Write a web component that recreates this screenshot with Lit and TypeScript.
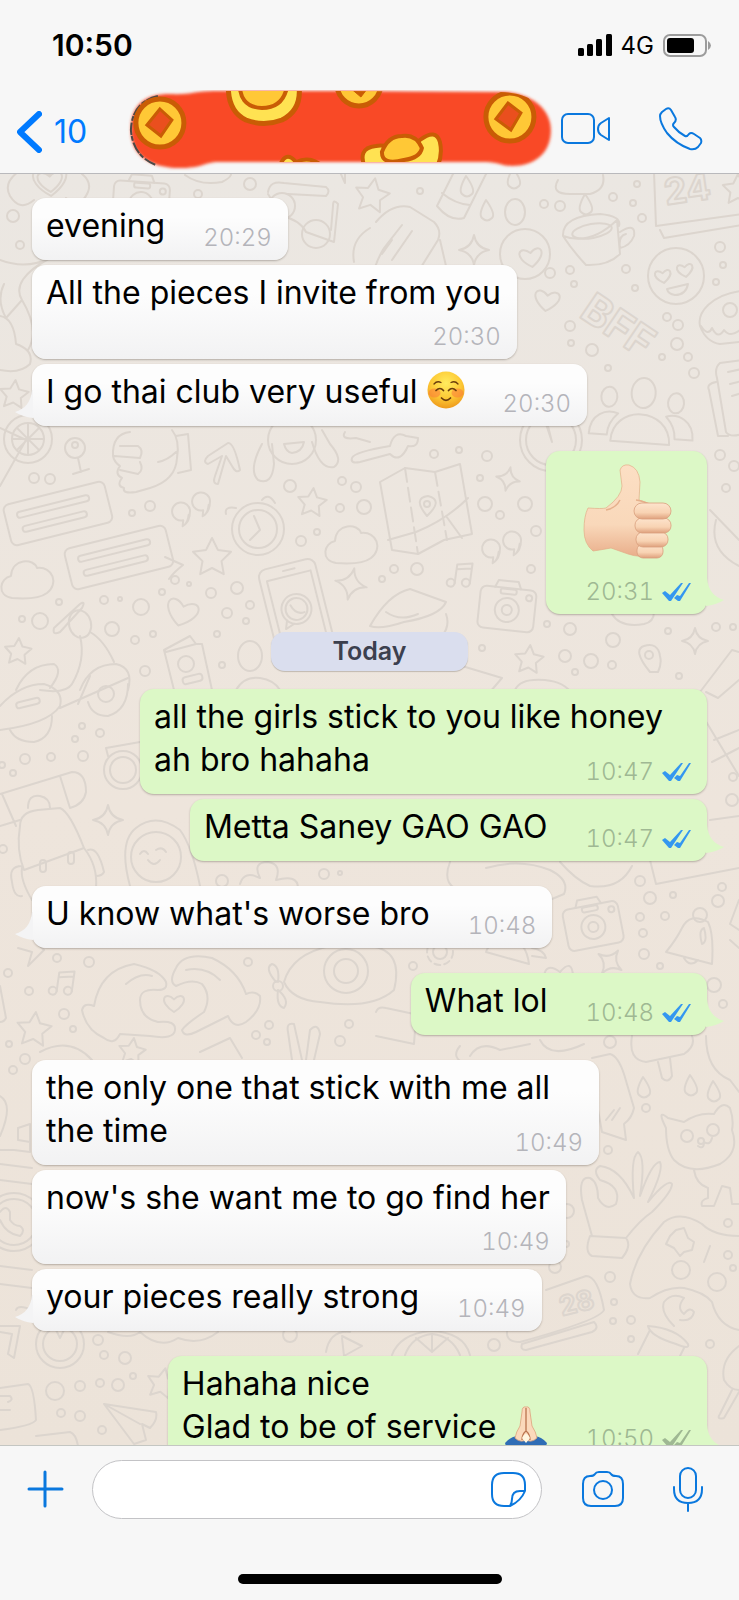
import { LitElement, html, svg, css, nothing } from "lit";
import { customElement, property } from "lit/decorators.js";

type Emoji = "smile" | "pray" | "thumb";
type Status = "read" | "sent";

interface Message {
  text: string;
  time: string;
  mine?: boolean;
  status?: Status;
  emoji?: Emoji;
  tail?: boolean;
  below?: boolean;
  next?: boolean;
}

const yesterday: Message[] = [
  { text: "evening", time: "20:29" },
  { text: "All the pieces I invite from you", time: "20:30", below: true },
  { text: "I go thai club very useful ", time: "20:30", emoji: "smile", tail: true },
  { text: "", time: "20:31", emoji: "thumb", mine: true, status: "read", tail: true, next: true },
];

const today: Message[] = [
  { text: "all the girls stick to you like honey ah bro hahaha", time: "10:47", mine: true, status: "read" },
  { text: "Metta Saney GAO GAO", time: "10:47", mine: true, status: "read", tail: true },
  { text: "U know what's worse bro", time: "10:48", tail: true, next: true },
  { text: "What lol", time: "10:48", mine: true, status: "read", tail: true, next: true },
  { text: "the only one that stick with me all the time", time: "10:49", next: true },
  { text: "now's she want me to go find her", time: "10:49", below: true },
  { text: "your pieces really strong", time: "10:49", tail: true },
  { text: "Hahaha nice\nGlad to be of service ", time: "10:50", emoji: "pray", mine: true, status: "sent", tail: true, next: true },
];

/* ---------- wallpaper doodles ---------- */

const at = (x: number, y: number, rot: number, body: unknown) =>
  svg`<g transform="translate(${x} ${y}) rotate(${rot})">${body}</g>`;

const star = (x: number, y: number, r: number, rot = 0) => {
  const pts = Array.from({ length: 10 }, (_, i) => {
    const a = (Math.PI / 5) * i - Math.PI / 2;
    const q = i % 2 ? r * 0.5 : r;
    return `${(q * Math.cos(a)).toFixed(1)},${(q * Math.sin(a)).toFixed(1)}`;
  }).join(" ");
  return at(x, y, rot, svg`<polygon points=${pts} />`);
};

const sparkle = (x: number, y: number, r: number, rot = 0) =>
  at(x, y, rot, svg`<path d="M0 ${-r}Q${r * 0.15} ${-r * 0.15} ${r} 0Q${r * 0.15} ${r * 0.15} 0 ${r}Q${-r * 0.15} ${r * 0.15} ${-r} 0Q${-r * 0.15} ${-r * 0.15} 0 ${-r}Z" />`);

const heart = (x: number, y: number, s: number, rot = 0) =>
  at(x, y, rot, svg`<path d="M0 ${s}C${-s * 1.9} ${-s * 0.2} ${-s} ${-s * 1.4} 0 ${-s * 0.4}C${s} ${-s * 1.4} ${s * 1.9} ${-s * 0.2} 0 ${s}Z" />`);

const drop = (x: number, y: number) =>
  at(x, y, 0, svg`<path d="M-1 -11Q9 3 5 7Q0 12 -5 7Q-9 3 -1 -11Z" />`);

const quote = (x: number, y: number) =>
  at(x, y, 5, svg`<path d="M8 3Q8 12 3 15L3 9A9 9 0 1 1 9 -1Q10 10 3 15" />`);

const note = (x: number, y: number) =>
  at(x, y, 8, svg`<circle cx="-9" cy="10" r="4" /><circle cx="6" cy="8" r="4" /><path d="M-5 10V-9L10 -12V8M-5 -4L10 -7" />`);

const camera = (x: number, y: number, rot: number) =>
  at(x, y, rot, svg`<rect x="-28" y="-20" width="56" height="42" rx="6" /><path d="M-14 -20L-11 -27H9L12 -20" /><rect x="-8" y="-19" width="16" height="5" rx="2" /><circle cy="2" r="12" /><circle cy="2" r="5" /><circle cx="21" cy="-12" r="3" />`);

const cloud = (x: number, y: number, rot = 0) =>
  at(x, y, rot, svg`<path d="M-16 18C-32 15 -28 -2 -17 -4C-16 -22 6 -22 9 -12C25 -14 31 4 19 13Q10 20 -16 18Z" />`);

const bubble = (x: number, y: number) =>
  at(x, y, -14, svg`<rect x="-50" y="-21" width="104" height="42" rx="6" /><rect x="-38" y="-11" width="74" height="6" rx="3" /><rect x="-36" y="4" width="66" height="6" rx="3" />`);

const people = (x: number, y: number) =>
  at(x, y, 4, svg`<ellipse cy="-24" rx="12" ry="15" /><path d="M-30 26C-30 -12 28 -12 29 26Z" /><ellipse cx="-34" cy="-18" rx="8" ry="10" /><ellipse cx="33" cy="-16" rx="8" ry="10" /><path d="M-52 20C-52 0 -36 -6 -24 -2Q-34 8 -34 20ZM52 20C52 0 36 -6 24 -2Q34 8 34 20Z" />`);

const phoneDoodle = (x: number, y: number) =>
  at(x, y, -14, svg`<rect x="-29" y="-44" width="58" height="100" rx="8" /><rect x="-22" y="-32" width="45" height="76" /><path d="M-4 -38H8" /><circle cy="2" r="15" /><circle cy="2" r="11" /><path d="M-12 11L-15 19L-6 16M-5 -3Q-2 8 7 7" />`);

const dots: number[][] = [
  [250, 184, 6], [198, 194, 4], [13, 216, 6], [20, 245, 4], [420, 191, 3], [544, 204, 4], [560, 206, 5], [613, 197, 4], [637, 184, 3],
  [633, 203, 3], [642, 218, 4], [550, 273, 5], [570, 270, 4], [574, 284, 3], [626, 269, 4], [635, 288, 3], [720, 247, 5], [723, 265, 3],
  [716, 282, 3], [570, 326, 5], [571, 343, 3], [592, 350, 6], [667, 317, 4], [678, 325, 5], [677, 344, 6], [662, 357, 3], [688, 357, 4],
  [608, 368, 3], [694, 373, 5], [34, 478, 5], [50, 479, 5], [150, 506, 5], [132, 513, 3], [290, 486, 6], [342, 481, 4], [356, 487, 5],
  [340, 508, 4], [364, 507, 7], [301, 541, 5], [317, 532, 3], [175, 580, 4], [162, 592, 3], [189, 584, 2], [211, 593, 5], [237, 588, 6],
  [104, 600, 4], [120, 599, 2], [59, 602, 3], [141, 607, 8], [40, 621, 8], [22, 619, 3], [112, 629, 7], [135, 640, 4], [153, 634, 3],
  [227, 613, 5], [250, 605, 4], [246, 621, 3], [217, 634, 3], [222, 665, 3], [145, 671, 5], [434, 454, 4], [459, 450, 3], [487, 456, 5],
  [480, 478, 3], [485, 504, 7], [525, 504, 7], [500, 515, 4], [536, 531, 5], [394, 569, 4], [417, 569, 6], [382, 579, 3], [531, 569, 4],
  [547, 624, 3], [570, 629, 6], [613, 640, 7], [565, 656, 6], [591, 661, 7], [612, 665, 4], [482, 648, 3], [575, 672, 3], [668, 631, 3],
  [720, 455, 5], [734, 466, 5], [726, 488, 4], [716, 627, 4], [733, 627, 3], [679, 676, 3], [82, 726, 3], [100, 733, 4], [75, 739, 3],
  [25, 759, 5], [51, 757, 4], [83, 756, 5], [2, 765, 3], [13, 773, 3], [3, 849, 4], [324, 874, 5], [340, 873, 2], [222, 881, 6],
  [57, 958, 4], [89, 962, 5], [8, 973, 4], [29, 991, 4], [64, 1014, 5], [73, 1029, 3], [248, 962, 4], [9, 1044, 3], [269, 1025, 4],
  [256, 1035, 4], [349, 1024, 4], [340, 1041, 5], [267, 1042, 3], [733, 777, 4], [732, 800, 6], [640, 881, 5], [650, 898, 6],
  [673, 895, 3], [722, 887, 4], [718, 901, 6], [640, 917, 4], [665, 916, 4], [643, 933, 4], [644, 954, 5], [660, 966, 3], [413, 966, 4],
  [714, 985, 7], [723, 1004, 4], [25, 1059, 5], [13, 1070, 4], [610, 1042, 6], [646, 1108, 4], [608, 1150, 4], [567, 1211, 7],
  [566, 1244, 3], [555, 1267, 6], [610, 1277, 5], [614, 1302, 3], [613, 1321, 3], [631, 1320, 4], [631, 1339, 3], [728, 1223, 4],
  [728, 1255, 4], [733, 1268, 3], [710, 1344, 4], [494, 1345, 6], [98, 1340, 5], [104, 1355, 4], [125, 1358, 6], [133, 1376, 3],
  [100, 1383, 4], [80, 1386, 5], [118, 1385, 6], [55, 1391, 9], [61, 1413, 4], [80, 1416, 5], [102, 1430, 4], [290, 1335, 7],
];

const wallpaper = svg`
  ${dots.map(([x, y, r]) => svg`<circle cx=${x} cy=${y} r=${r} />`)}
  ${heart(50, 181, 15, -4)}${heart(50, 181, 11, -4)}
  <path d="M18 172Q3 183 10 196Q20 212 34 200M66 198Q80 210 88 192Q92 182 82 174" />
  ${camera(141, 202, 4)}
  <path d="M185 175Q200 186 222 182Q234 176 230 172M340 172L345 183V172M268 192Q270 180 284 183L326 187Q331 191 326 196L288 194M268 194L282 216Q300 220 306 232L334 242L338 204Q333 198 333 206L331 230" />
  <circle cx="282" cy="206" r="13" /><circle cx="316" cy="234" r="14" />
  <path d="M0 260Q26 270 50 258Q10 280 22 300L6 318Q-4 300 4 284M22 300Q40 330 28 350M0 316Q14 318 16 344Q34 350 30 364Q20 374 0 370M354 262Q350 240 370 228" />
  ${star(14, 395, 15, 6)}${star(738, 190, 16)}${star(372, 196, 18, 10)}
  <circle cx="28" cy="439" r="24" /><circle cx="28" cy="439" r="16" /><path d="M28 423V455M12 439H44M17 428L39 450M39 428L17 450M0 428L26 440L0 486" />
  <circle cx="75" cy="448" r="10" /><circle cx="75" cy="445" r="3" /><path d="M78 458L81 472M73 474L89 469" />
  <path d="M454 172L437 206Q450 222 464 218L487 172M442 193Q455 204 470 205M402 225L384 248Q372 268 374 280M376 222Q392 203 410 207L434 222Q442 230 438 240L418 272M382 254L392 240M392 260L412 231M440 240L446 266" />
  ${drop(467, 187)}${drop(514, 179)}${drop(487, 211)}${drop(586, 205)}
  <ellipse cx="515" cy="212" rx="10" ry="13" /><path d="M558 180Q550 194 570 194H590Q606 190 603 175" />
  ${sparkle(474, 250, 15)}${sparkle(508, 479, 12, 12)}${sparkle(695, 641, 13)}${sparkle(351, 584, 16, 12)}${sparkle(108, 820, 15)}${sparkle(610, 962, 14, 35)}
  <circle cx="525" cy="254" r="25" />${heart(531, 257, 10, -8)}${heart(547, 300, 11, 8)}
  <path d="M563 236Q590 246 617 220L620 254Q608 266 586 265Q572 250 563 236Q562 216 600 214Q622 216 619 226M620 232Q636 222 634 236Q630 246 620 248Q618 236 626 234" /><ellipse cx="592" cy="231" rx="20" ry="7" transform="rotate(-10 592 231)" />
  <path d="M654 172L656 226L742 214M660 230L664 238L742 225" />
  <text x="666" y="205" font-size="36" transform="rotate(-8 666 205)">24</text>
  <circle cx="676" cy="276" r="28" />${heart(663, 276, 7, -8)}${heart(685, 270, 7, -8)}<path d="M667 289L688 284Q686 295 675 295Q668 294 667 289Z" />
  <path d="M740 291C712 295 697 312 700 326Q706 342 720 344L740 342M701 326Q708 337 712 328Q718 340 724 330Q730 338 740 330" /><circle cx="730" cy="310" r="7" />
  <text x="578" y="316" font-size="42" transform="rotate(34 578 316)">BFF</text>
  ${people(642, 417)}
  <path d="M742 360L720 363Q714 368 717 378L726 432Q730 438 742 434M716 382Q706 384 709 390L718 436L728 436M728 372L742 369M730 384L742 381M732 396L742 393" />
  <path d="M130 432Q112 434 113 456Q114 462 120 466Q114 474 122 478Q116 486 124 488Q122 494 136 492L150 488Q176 480 177 458Q180 440 172 430M120 446H138Q144 450 140 458L114 456M140 462Q144 470 138 474L120 470M158 462Q168 460 176 452M176 436L188 434L191 470L178 473" />
  <path d="M228 443Q234 442 240 470Q236 474 232 466L226 456L218 484Q212 484 215 476L222 456L208 464Q202 462 208 456Z" />
  <circle cx="292" cy="440" r="24" /><path d="M284 444L304 442Q302 452 292 453Q286 452 284 444ZM262 444Q248 470 258 480Q272 486 274 464L272 444M312 442Q320 470 334 467Q344 460 330 444L322 430" />
  <path d="M345 432Q340 440 356 438L370 442M352 458Q354 452 390 446Q394 430 406 436L418 438Q418 448 408 446Q400 464 390 454L360 462Q350 464 352 458" />
  <circle cx="551" cy="440" r="31" /><circle cx="551" cy="440" r="25" /><path d="M546 424Q550 436 552 442L548 426" />
  ${bubble(56, 514)}${at(119, 559, 0, svg`<path d="M46 -2L64 6Q54 14 50 20" />`)}${bubble(117, 558)}
  ${quote(181, 511)}${quote(201, 501)}${quote(491, 548)}${quote(512, 540)}
  <circle cx="258" cy="529" r="26" /><circle cx="258" cy="529" r="19" /><path d="M254 516L260 530L250 540M262 500Q268 492 275 503M226 514Q224 506 236 508" />
  ${star(312, 503, 15, 6)}${star(212, 558, 20)}${star(529, 660, 15, 5)}${star(18, 652, 14, 4)}
  ${cloud(28, 580)}${cloud(352, 545)}${heart(182, 612, 14, 16)}
  ${phoneDoodle(296, 607)}${note(461, 574)}${camera(507, 608, 6)}
  <path d="M380 482L405 468L435 472L460 464L472 534L444 540L418 554L392 550ZM388 540L416 532Q446 520 468 498M446 516L462 538" /><path d="M405 468L418 554M435 472L447 540" stroke-dasharray="14 6" /><path d="M427 516Q412 498 428 496Q444 500 427 516Z" /><circle cx="427" cy="504" r="3" />
  <path d="M370 626Q388 594 410 589L446 602Q440 616 404 622Q380 630 370 626M386 612Q400 622 418 614M446 614Q452 630 434 644L370 640" />
  <path d="M54 628L80 604Q86 600 82 608L60 632Q52 636 54 628ZM80 636Q86 660 72 684Q66 694 40 690M90 632Q104 640 114 662M16 690Q28 664 54 664Q64 670 50 688M80 690Q90 664 116 664Q134 668 128 690" /><ellipse cx="80" cy="624" rx="11" ry="14" transform="rotate(-14 80 624)" />
  <path d="M164 650L190 636L196 644L166 652ZM164 650L174 690M202 644L212 690M196 644H202" /><circle cx="186" cy="664" r="8" /><rect x="182" y="678" width="20" height="7" rx="3" transform="rotate(-14 182 678)" />
  <ellipse cx="250" cy="656" rx="12" ry="15" /><path d="M236 690Q244 676 260 678Q274 680 280 690M462 666L502 678L490 692M515 690Q520 678 545 680Q565 682 572 694" />
  <path d="M650 672Q632 650 644 646Q658 642 660 656Q662 664 658 672ZM710 510L739 540M716 520Q708 550 739 566M700 692L732 650L739 652M612 614Q620 628 644 624Q654 622 654 612M693 700L739 776M706 692L718 698L739 680" /><circle cx="649" cy="655" r="4" />
  <path d="M0 706Q20 684 44 684Q64 690 60 706Q48 724 0 730M60 708L128 678M78 704L90 676M10 730Q16 742 34 742Q52 738 52 716M88 702Q92 716 108 716Q128 710 128 684" /><circle cx="106" cy="694" r="8" /><rect x="16" y="700" width="24" height="6" rx="3" transform="rotate(-14 28 703)" />
  <path d="M140 742L106 748L108 756M0 794L72 772Q86 772 86 792Q84 804 70 808M0 826L20 820M2 794L16 826M60 776L70 808" /><circle cx="123" cy="770" r="19" /><circle cx="123" cy="770" r="13" />
  <path d="M20 826Q20 812 38 810L60 808Q70 812 84 848L24 870Q16 850 20 826ZM22 868Q20 880 32 900M84 848Q98 866 96 888M22 866Q8 866 12 882Q14 898 22 896M88 850Q98 846 104 872Q102 876 96 876M28 808Q28 794 40 796Q50 798 50 808" /><rect x="40" y="860" width="6" height="12" rx="3" /><rect x="68" y="852" width="6" height="12" rx="3" />
  <circle cx="156" cy="857" r="25" /><path d="M130 886Q118 842 136 828Q156 812 180 830Q192 846 200 886M140 854Q144 848 148 854M156 850Q162 846 166 852M148 860Q154 868 160 860M240 884Q244 870 260 878Q252 862 268 862Q282 864 276 880Q298 874 298 888" />
  <path d="M436 846Q450 860 470 852M450 862Q440 888 466 892M486 868Q520 858 550 870Q570 880 564 894L540 904M560 862Q576 880 590 886Q620 890 632 866M650 860L656 884L739 868M710 820L739 816M714 740L739 730M712 762L739 748" />
  ${camera(593, 925, -11)}
  <circle cx="700" cy="915" r="7" /><path d="M666 952Q676 940 682 928Q690 912 708 922Q714 934 712 964ZM684 958Q690 968 698 960M704 928Q698 930 702 944Q708 942 704 928M739 900L730 924L739 930M730 940L739 948" />
  <path d="M18 948L32 952L28 966L44 950L38 944M0 986L6 1018Q4 1022 0 1022" />${note(63, 982)}${star(34, 1030, 18, 6)}${star(132, 1052, 14, 8)}
  <path d="M94 1006Q100 970 134 964Q160 970 166 982Q168 990 158 990Q140 988 140 1000Q140 1018 158 1022Q176 1020 175 1030Q174 1040 150 1036L120 1034Q114 1046 104 1038Q86 1030 82 1010Q84 1002 94 1006M126 984Q140 972 152 976" />
  <path d="M246 994Q238 970 212 958Q184 952 176 968Q168 982 176 986Q192 978 202 984Q212 996 204 1012Q186 1024 182 1030Q184 1038 196 1032L228 1016Q234 1030 246 1022Q262 1010 260 996Q254 990 246 994M186 970Q206 966 220 980" />${heart(174, 1003, 9)}
  <path d="M284 982Q292 954 330 946H370Q404 950 394 990Q372 1010 320 1002Q292 1000 284 982ZM276 982Q264 968 272 964Q280 966 278 982M278 990Q290 1000 284 1008Q276 1006 278 990" /><circle cx="346" cy="971" r="22" /><circle cx="346" cy="971" r="12" /><circle cx="278" cy="986" r="5" />
  <path d="M486 952Q490 940 508 938Q526 940 529 964ZM532 948Q544 950 546 958L532 956M544 976Q546 962 560 972Q572 958 573 976M376 1012Q378 1006 386 1008L414 1014M376 1036L414 1044L416 1016" /><circle cx="440" cy="952" r="7" /><circle cx="440" cy="952" r="13" stroke-dasharray="6 4" />
  <path d="M292 1060L288 1032Q286 1022 294 1024L302 1060M306 1060L310 1030Q318 1022 320 1034L314 1060M200 1052L230 1038L242 1058M40 1052Q70 1036 92 1060M460 1046Q450 1058 466 1064M540 1040Q550 1060 584 1044M470 1056Q480 1040 500 1050L530 1044M632 1036Q628 1060 646 1062L684 1054Q696 1046 692 1036M658 1062L662 1078Q668 1084 672 1076L670 1058M706 1036Q706 1070 730 1080L739 1092" />
  <path d="M592 1058L610 1054Q618 1056 624 1074L634 1108Q632 1118 624 1124L626 1140L602 1132L598 1110M606 1120L614 1110M612 1120L620 1108" />${drop(644, 1088)}${drop(691, 1086)}${drop(714, 1092)}
  <path d="M666 1128Q656 1108 668 1118L684 1122Q698 1112 714 1114Q722 1100 730 1108Q734 1120 732 1130Q740 1152 720 1164Q690 1176 674 1160Q666 1150 666 1128ZM694 1170Q696 1184 708 1188V1198Q700 1200 702 1206L714 1206L722 1186L730 1188L732 1204L739 1204M698 1146Q704 1150 704 1142Q710 1146 712 1138" /><circle cx="687" cy="1136" r="6" /><circle cx="713" cy="1130" r="6" /><circle cx="701" cy="1141" r="3" />
  <path d="M592 1236L582 1200Q578 1176 590 1178Q598 1182 598 1198Q606 1212 616 1204Q622 1186 600 1180Q592 1170 600 1166Q620 1168 634 1198Q630 1158 638 1152Q646 1158 640 1196Q652 1162 660 1162Q664 1170 648 1202Q668 1178 672 1184Q672 1192 652 1212Q640 1220 626 1238M590 1236Q584 1252 592 1256L622 1258Q632 1246 626 1238Z" />
  <path d="M630 1284Q636 1252 664 1222Q680 1210 702 1224Q714 1236 739 1236M630 1284Q632 1300 650 1298Q668 1286 684 1288Q704 1292 712 1302Q718 1326 739 1330M676 1230L684 1228L688 1238L694 1242L692 1250L684 1252L680 1256L674 1248L666 1244L670 1236ZM710 1246L704 1262" /><circle cx="681" cy="1270" r="9" /><circle cx="717" cy="1282" r="9" />
  <path d="M546 1290L586 1276Q598 1276 604 1310Q600 1320 520 1342Q506 1342 507 1332M522 1344L594 1322Q600 1328 592 1332L526 1350Q520 1350 522 1344Z" /><text x="562" y="1316" font-size="27" transform="rotate(-14 562 1316)">28</text>
  <path d="M674 1326Q660 1312 664 1302Q672 1292 684 1298Q676 1308 684 1314Q690 1306 694 1312Q692 1322 680 1320M648 1326Q676 1328 688 1344Q690 1350 676 1344Q650 1336 648 1326ZM650 1330L638 1354M684 1348L680 1356M739 1346Q720 1360 724 1380Q730 1390 739 1390M732 1390L720 1414Q716 1420 724 1418L739 1392M392 1355Q400 1334 430 1331Q464 1332 470 1355M405 1355Q412 1336 432 1334Q452 1336 460 1355M432 1352L416 1338M432 1352V1334M432 1352L448 1338" />
  <path d="M0 1096Q14 1104 0 1136M0 1150H14L30 1152V1124L18 1128V1140L30 1142M0 1164L32 1168M0 1180L32 1184M0 1266L32 1270M0 1284L32 1288" /><circle cx="14" cy="1222" r="29" /><circle cx="14" cy="1222" r="23" /><path d="M0 1212Q6 1204 10 1212V1220Q14 1226 20 1226Q26 1230 20 1236Q6 1234 0 1220" />
  <circle cx="60" cy="1344" r="24" /><circle cx="60" cy="1344" r="17" /><path d="M56 1330L60 1338L64 1330M0 1326H20L14 1358L8 1354L12 1334L0 1332M16 1310Q18 1304 32 1310" />
  <path d="M108 1332Q130 1340 140 1332Q160 1350 178 1338Q200 1346 218 1332M326 1352Q330 1330 350 1332M342 1338L344 1356L362 1346L342 1336" />${star(162, 1384, 16, 12)}
  <path d="M104 1404L156 1412Q158 1420 150 1428L142 1424L146 1440L134 1444ZM104 1404L140 1424M0 1388L28 1384Q34 1386 36 1420Q32 1426 0 1430M0 1396H10Q14 1400 8 1402M0 1410H10M36 1436L70 1432Q76 1434 78 1446" />
`;

/* ---------- emoji pictures ---------- */

const smile = html`
  <svg class="face" viewBox="0 0 38 38" role="img" aria-label="smiling face">
    <defs><radialGradient id="face" cx="50%" cy="32%" r="68%"><stop offset="0" stop-color="#ffec5e" /><stop offset=".6" stop-color="#fdc935" /><stop offset="1" stop-color="#ee9a1c" /></radialGradient></defs>
    <circle cx="19" cy="19" r="18.500" fill="url(#face)" />
    <ellipse cx="7.500" cy="22" rx="6" ry="4.500" fill="#fb7a3a" opacity=".55" /><ellipse cx="30.500" cy="22" rx="6" ry="4.500" fill="#fb7a3a" opacity=".55" />
    <g fill="none" stroke="#6b3d0c" stroke-width="1.700" stroke-linecap="round"><path d="M9 19.500Q13 15.500 16.500 19.500M21.500 19.500Q25 15.500 29 19.500M14.500 27Q19 31.500 23.500 27" /><path stroke-width="1.300" d="M7 13Q10 9.500 14 11.500M24 11.500Q28 9.500 31 13" /></g>
  </svg>`;

const pray = html`
  <svg class="hands" viewBox="0 0 42 42" role="img" aria-label="folded hands">
    <path d="M0 37Q8 28 16 31L21 36V44H2ZM42 37Q34 28 26 31L21 36V44H40Z" fill="#2f6db5" />
    <path d="M21 1Q17 0 17 6L15 20Q11 26 10 32Q15 37 21 34Q27 37 32 32Q31 26 27 20L25 6Q25 0 21 1Z" fill="#fbd9bb" stroke="#dda27c" stroke-width=".8" />
    <path d="M21 2V25M21 25Q17 28 17 34M21 25Q25 28 25 34" fill="none" stroke="#b9734e" stroke-width="1.300" />
    <path d="M17 32Q21 24 25 32L21 37Z" fill="#fff6e0" />
  </svg>`;

const thumb = html`
  <svg class="thumb" viewBox="560 457 131 112" role="img" aria-label="thumbs up">
    <defs>
      <linearGradient id="palm" x1="0" y1="0" x2="0" y2="1"><stop offset="0" stop-color="#fcdfc4" /><stop offset=".65" stop-color="#f9d8ba" /><stop offset="1" stop-color="#e9ae8a" /></linearGradient>
      <linearGradient id="finger" x1="0" y1="0" x2="0" y2="1"><stop offset="0" stop-color="#fde4cd" /><stop offset=".6" stop-color="#f8d3b3" /><stop offset="1" stop-color="#dfa17d" /></linearGradient>
    </defs>
    <path d="M588 508Q602 509 606 508Q622 496 622 486Q621 478 620 470Q622 464 629 465Q639 468 640 482L639 500Q650 503 658 508V556Q640 558 628 554L611 548Q600 550 593 551Q584 544 584 530Q584 516 588 508Z" fill="url(#palm)" stroke="#e3ad88" stroke-width=".7" />
    <path d="M606 510Q616 508 620 500M636 500Q644 501 650 505" fill="none" stroke="#e5b08c" stroke-width="1.500" />
    <g fill="url(#finger)" stroke="#d9a07d" stroke-width=".8"><rect x="637" y="544" width="26" height="14" rx="6" /><rect x="636" y="532" width="32" height="15" rx="7" /><rect x="635" y="518" width="36" height="15" rx="7" /><rect x="634" y="503" width="37" height="16" rx="8" /></g>
  </svg>`;

const emojis: Record<Emoji, unknown> = { smile, pray, thumb };

@customElement("chat-bubble")
class ChatBubble extends LitElement {
  @property({ attribute: false }) message!: Message;

  static styles = css`
    :host { display: flex; }
    :host([mine]) { justify-content: flex-end; }
    .bubble {
      position: relative;
      box-sizing: border-box;
      max-width: 84%;
      padding: 6px 16px 6px 14px;
      border-radius: 14px;
      background: linear-gradient(#fdfdfd 30%, #f2f2f3);
      box-shadow: 0 1px 2px rgba(60, 50, 40, 0.32);
      display: flow-root;
    }
    .mine { background: #dcf8c6; }
    .text {
      font-size: 32px;
      line-height: 43px;
      color: #000;
      white-space: pre-line;
    }
    .meta {
      float: right;
      display: flex;
      align-items: center;
      gap: 8px;
      margin: 18px 0 0 38px;
      font-size: 24px;
      line-height: 32px;
      font-weight: 300;
      font-variant-numeric: tabular-nums;
      color: #b4b4ba;
    }
    .mine .meta { color: #9fb893; }
    .below .text { display: block; }
    .below .meta { margin-top: 7px; }
    .sticker .meta { margin: 7px 0 0; }
    .ticks { width: 29px; height: 20px; fill: #3497f0; }
    .ticks.sent { fill: #9fb893; }
    .emoji { display: inline-flex; height: 32px; margin-top: -6px; vertical-align: baseline; }
    .emoji svg { flex: none; }
    .face { display: block; width: 38px; height: 38px; }
    .hands { display: block; width: 42px; height: 42px; }
    .thumb { display: block; width: 131px; height: 112px; }
    .emoji { height: 38px; vertical-align: -6px; }
    .emoji.pray { height: 42px; vertical-align: -10px; }
    .tail {
      position: absolute;
      left: -17px;
      bottom: 8px;
      width: 18px;
      height: 28px;
      fill: #f4f4f5;
    }
    .mine .tail { left: auto; right: -17px; fill: #dcf8c6; transform: scaleX(-1); }
  `;

  render() {
    const m = this.message;
    const kind = !m.text ? "sticker" : m.below ? "below" : "";
    const picture = m.emoji ? emojis[m.emoji] : nothing;
    const ticks = m.status
      ? html`<svg class="ticks ${m.status}" viewBox="0 0 29 20" role="img" aria-label=${m.status}>
          <path d="M0 11L3 9L8 13L19 1H21L9 19H7ZM12 16L15 13L18 14L27 1H29L18 19H16Z" />
        </svg>`
      : nothing;
    const meta = html`<span class="meta"><time>${m.time}</time>${ticks}</span>`;
    const tail = m.tail
      ? html`<svg class="tail" viewBox="0 0 18 28" aria-hidden="true"><path d="M18 0H17C16 12 10 19 0 22Q8 27 18 28Z" /></svg>`
      : nothing;
    const inline = m.emoji ? html`<span class="emoji ${m.emoji}">${picture}</span>` : nothing;
    return html`<div class="bubble ${m.mine ? "mine" : ""} ${kind}">${m.text ? html`<span class="text">${m.text}${inline}</span>` : picture}${meta}${tail}</div>`;
  }
}

@customElement("app-root")
class AppRoot extends LitElement {
  static styles = css`
    :host {
      display: flex;
      flex-direction: column;
      height: 100vh;
      overflow: hidden;
      background: #f7f7f7;
      font-family: Inter, "Liberation Sans", sans-serif;
      color: #000;
    }
    button { border: 0; padding: 0; background: none; display: flex; color: #0a78de; cursor: pointer; }
    svg { display: block; }
    .line { fill: none; stroke: currentColor; stroke-width: 2; stroke-linecap: round; stroke-linejoin: round; }
    .status {
      display: flex;
      align-items: center;
      height: 90px;
      padding: 0 28px 0 52px;
      gap: 9px;
    }
    .clock { font-size: 30px; font-weight: 600; margin-right: auto; }
    .network { font-size: 24px; }
    .signal { width: 34px; height: 22px; }
    .battery { width: 48px; height: 23px; }
    .nav {
      display: flex;
      align-items: center;
      height: 83px;
      border-bottom: 1px solid #b9b9bc;
    }
    .back {
      align-items: center;
      gap: 12px;
      padding-left: 17px;
      color: #007aff;
      font: inherit;
      font-size: 32px;
    }
    .chevron { width: 25px; height: 42px; fill: none; stroke: #007aff; stroke-width: 6; stroke-linecap: round; stroke-linejoin: round; }
    .contact { flex: 1; min-width: 0; margin: 0 4px 0 36px; }
    .contact svg { width: 100%; height: 83px; }
    .calls { display: flex; align-items: center; gap: 48px; padding: 0 36px 6px 0; }
    .video { width: 50px; height: 32px; }
    .phone { width: 44px; height: 44px; }
    .chat {
      flex: 1;
      min-height: 0;
      display: grid;
      grid-template: minmax(0, 1fr) / minmax(0, 1fr);
      overflow: hidden;
      background: linear-gradient(#ebe7e2, #eee5dc 50%, #ece3d9);
    }
    .wallpaper {
      grid-area: 1 / 1;
      width: 100%;
      height: 100%;
      fill: none;
      stroke: #dcd5ce;
      stroke-width: 2;
      stroke-linejoin: round;
      stroke-linecap: round;
      font-weight: 700;
    }
    .messages {
      grid-area: 1 / 1;
      display: flex;
      flex-direction: column;
      gap: 5px;
      padding: 24px 32px 0;
    }
    .next { margin-top: 20px; }
    .day {
      align-self: center;
      margin: 13px 0;
      min-width: 197px;
      border-radius: 14px;
      background: #dadeee;
      box-shadow: 0 1px 1px rgba(60, 50, 40, 0.25);
      text-align: center;
      font-size: 25px;
      line-height: 39px;
      font-weight: 600;
      color: #3c404e;
    }
    .composer {
      display: flex;
      align-items: center;
      height: 86px;
      padding: 0 35px 0 27px;
      border-top: 1px solid #c4c6c2;
    }
    .plus { width: 37px; height: 38px; stroke-width: 3; }
    .field {
      flex: 1;
      min-width: 0;
      margin: 0 39px 0 28px;
      height: 59px;
      box-sizing: border-box;
      border: 1px solid #c3c3c6;
      border-radius: 30px;
      background: #fff;
      display: flex;
      align-items: center;
      padding: 0 14px 0 24px;
    }
    input { flex: 1; min-width: 0; border: 0; outline: 0; background: none; font: inherit; font-size: 32px; }
    .sticker { width: 37px; height: 37px; stroke-width: 2; }
    .camera { width: 44px; height: 38px; margin-right: 47px; stroke-width: 2; }
    .mic { width: 32px; height: 46px; stroke-width: 2; }
    .home { display: flex; justify-content: center; align-items: flex-end; height: 52px; padding-bottom: 16px; }
    .bar { width: 264px; height: 10px; border-radius: 5px; background: #000; }
  `;

  private list(items: Message[]) {
    return items.map(
      (m) => html`<chat-bubble class=${m.next ? "next" : ""} ?mine=${!!m.mine} .message=${m}></chat-bubble>`
    );
  }

  render() {
    return html`
      <div class="status">
        <span class="clock">10:50</span>
        <svg class="signal" viewBox="0 0 34 22" role="img" aria-label="Signal">
          <rect y="14" width="6" height="8" rx="1.500" /><rect x="9" y="10" width="6" height="12" rx="1.500" /><rect x="18" y="5" width="6" height="17" rx="1.500" /><rect x="28" width="6" height="22" rx="1.500" />
        </svg>
        <span class="network">4G</span>
        <svg class="battery" viewBox="0 0 48 23" role="img" aria-label="Battery">
          <rect x="1" y="1" width="42" height="21" rx="6" fill="none" stroke="#9c9c9c" stroke-width="2" /><rect x="4" y="4" width="27" height="15" rx="3" /><path d="M45 7Q48 9 48 11.500Q48 14 45 16Z" fill="#9c9c9c" />
        </svg>
      </div>
      <header class="nav">
        <button class="back" aria-label="Back, 10 unread">
          <svg class="chevron" viewBox="0 0 25 42"><path d="M22 3L3 21L22 39" /></svg>
          <span>10</span>
        </button>
        <div class="contact">
          <svg viewBox="126 90 428 83" role="img" aria-label="Contact name hidden">
            <defs>
              <clipPath id="band"><path d="M131 130C131 104 146 94 170 94C190 95 196 91 214 91H340L500 92C530 92 551 108 551 130C551 154 534 166 512 166C502 166 498 162 486 162H216C204 163 200 169 174 168C150 166 131 156 131 130Z" /></clipPath>
              <filter id="soft" x="-5%" y="-10%" width="110%" height="120%"><feGaussianBlur stdDeviation="1.500" /></filter>
            </defs>
            <path d="M131 130C131 104 146 94 170 94C190 95 196 91 214 91H340L500 92C530 92 551 108 551 130C551 154 534 166 512 166C502 166 498 162 486 162H216C204 163 200 169 174 168C150 166 131 156 131 130Z" fill="#f94925" filter="url(#soft)" />
            <path d="M158 96Q132 102 131 130Q133 156 156 165" fill="none" stroke="#4b4a48" stroke-width="2" stroke-dasharray="12 1 5 2" />
            <g clip-path="url(#band)">
              <g fill="#ffc836" stroke="#c95c05">
                <circle cx="160" cy="123" r="24" stroke-width="5" /><path d="M160 109L172 120L161 136L147 125Z" fill="#ea4f1e" stroke-width="3" />
                <circle cx="510" cy="117" r="24" stroke-width="5" /><path d="M508 103L521 113L511 130L496 119Z" fill="#ea4f1e" stroke-width="3" />
                <circle cx="359" cy="84" r="22" stroke-width="5" /><path d="M359 76L368 88L361 97L348 86Z" fill="#c95c05" />
                <path d="M229 76Q225 110 246 120Q264 127 282 120Q306 108 297 76Z" fill="#ffe252" stroke-width="5" /><path d="M240 80Q238 107 262 108Q286 108 288 80Z" stroke-width="4" />
                <path d="M366 170Q356 148 376 146Q386 144 390 150Q408 156 420 140Q436 128 440 142Q444 160 432 176Z" fill="#ffe252" stroke-width="4" /><path d="M382 152Q388 136 402 136Q416 134 422 148Q420 158 404 160Q382 166 382 152Z" stroke-width="4" />
                <path d="M278 172Q284 148 296 162Q314 154 328 172Z" fill="#ffe252" stroke-width="4" />
              </g>
            </g>
          </svg>
        </div>
        <div class="calls">
          <button aria-label="Video call"><svg class="video line" viewBox="0 0 50 32"><rect x="1" y="1" width="32" height="29" rx="6" /><path d="M48 5V27L40 22Q37 20 37 16Q37 12 40 10Z" /></svg></button>
          <button aria-label="Voice call"><svg class="phone line" viewBox="0 0 44 44"><path d="M3 5L7 2Q10 0 12 3L16 10Q18 13 15 16Q13 18 15 20Q20 26 26 29Q28 30 30 27Q32 25 35 27L41 31Q43 33 42 36L39 40Q36 43 31 42Q17 37 8 26Q1 16 1 9Q1 7 3 5Z" /></svg></button>
        </div>
      </header>
      <main class="chat">
        <svg class="wallpaper" viewBox="0 174 739 1272" preserveAspectRatio="xMidYMin slice" aria-hidden="true">${wallpaper}</svg>
        <div class="messages">
          ${this.list(yesterday)}
          <div class="day">Today</div>
          ${this.list(today)}
        </div>
      </main>
      <form class="composer" @submit=${(e: Event) => e.preventDefault()}>
        <button type="button" aria-label="Attach"><svg class="plus line" viewBox="0 0 37 38"><path d="M2 19H35M18 2V36" /></svg></button>
        <div class="field">
          <input type="text" aria-label="Message" />
          <button type="button" aria-label="Stickers"><svg class="sticker line" viewBox="0 0 37 37"><path d="M20 35H14Q2 35 2 23V14Q2 2 14 2H23Q35 2 35 14V20Q31 30 20 35ZM20 35Q22 32 22 28Q22 20 30 20H35" /></svg></button>
        </div>
        <button type="button" aria-label="Camera"><svg class="camera line" viewBox="0 0 44 38"><path d="M2 14Q2 6 9 6Q13 6 14 4Q15 2 18 2H26Q29 2 30 4Q31 6 35 6Q42 6 42 14V28Q42 36 34 36H10Q2 36 2 28Z" /><circle cx="22" cy="20" r="9" /></svg></button>
        <button type="button" aria-label="Record voice"><svg class="mic line" viewBox="0 0 32 46"><rect x="8" y="2" width="16" height="30" rx="8" /><path d="M2 21V23Q2 37 16 37Q30 37 30 23V21M16 37V45" /></svg></button>
      </form>
      <div class="home"><div class="bar"></div></div>
    `;
  }
}
